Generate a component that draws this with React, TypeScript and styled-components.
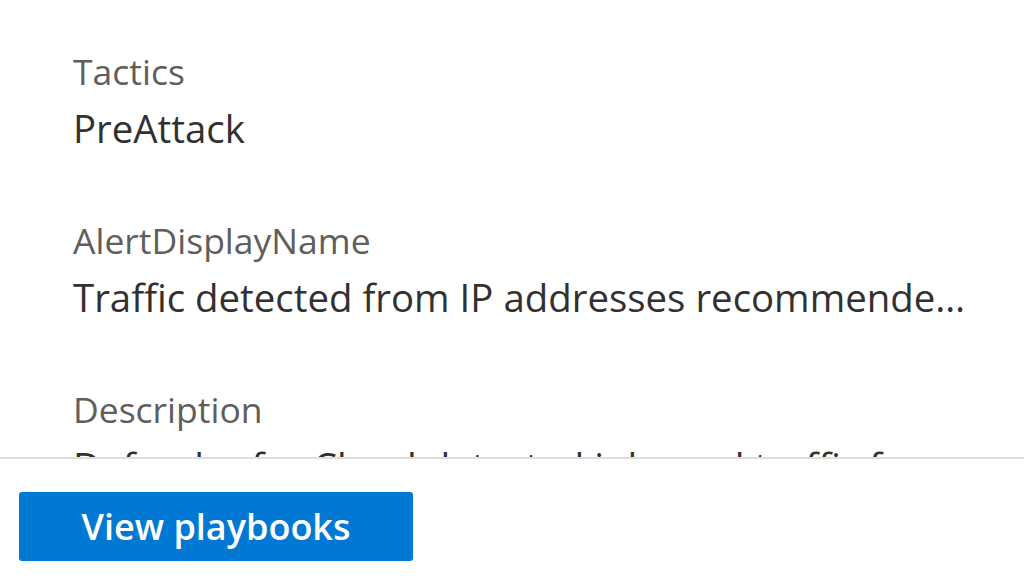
import React from 'react';
import styled, { createGlobalStyle } from 'styled-components';

const GlobalStyle = createGlobalStyle`
  html, body {
    margin: 0;
    padding: 0;
    background: #ffffff;
  }
  body {
    font-family: "Open Sans", "Noto Sans", sans-serif;
  }
`

const Page = styled.div`
  width: 1024px;
  height: 581px;
  display: flex;
  flex-direction: column;
  overflow: hidden;
  background: #ffffff;
`

const Details = styled.div`
  height: 457px;
  overflow: hidden;
  padding: 47px 30px 0 73px;
  box-sizing: border-box;
`

const Field = styled.div`
  display: flex;
  flex-direction: column;
  margin-bottom: 55px;
`

const Label = styled.div`
  font-size: 35.5px;
  line-height: 48px;
  color: #605e5c;
`

const Value = styled.div`
  font-size: 38.4px;
  line-height: 66px;
  color: #323130;
  white-space: nowrap;
  overflow: hidden;
  text-overflow: ellipsis;
  max-width: 911px;
`

const Footer = styled.div`
  flex: 1;
  border-top: 2px solid #dedede;
  padding: 33px 19px 0;
`

const PrimaryButton = styled.button`
  width: 394px;
  height: 69px;
  border: none;
  border-radius: 3px;
  background: #0078d4;
  color: #ffffff;
  font-family: "Open Sans", "Noto Sans", sans-serif;
  font-size: 36px;
  font-weight: 600;
  cursor: pointer;
`

export default function App() {
  const fields = [
    { label: 'Tactics', value: 'PreAttack' },
    { label: 'AlertDisplayName', value: 'Traffic detected from IP addresses recommended for blocking' },
    { label: 'Description', value: 'Defender for Cloud detected inbound traffic from IP addresses that are recommended to be blocked' },
  ];

  return (
    <Page>
      <GlobalStyle />
      <Details>
        {fields.map((f) => (
          <Field key={f.label}>
            <Label>{f.label}</Label>
            <Value>{f.value}</Value>
          </Field>
        ))}
      </Details>
      <Footer>
        <PrimaryButton>View playbooks</PrimaryButton>
      </Footer>
    </Page>
  )
}
